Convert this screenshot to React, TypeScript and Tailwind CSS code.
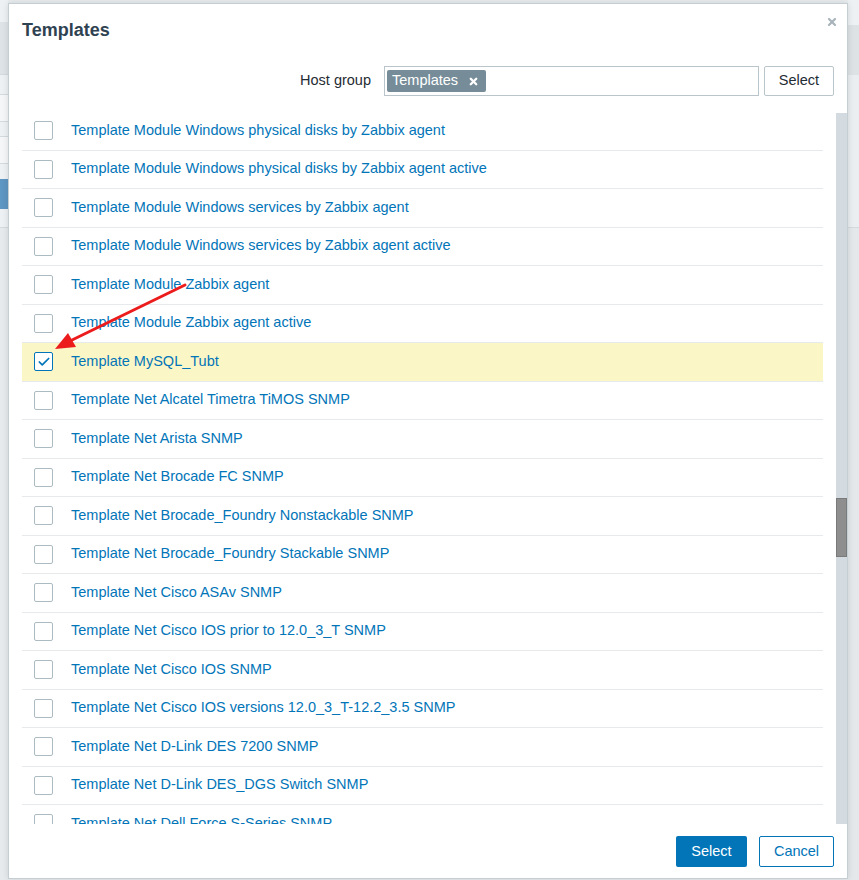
import { Check, X } from 'lucide-react'

const templates = [
  'Template Module Windows physical disks by Zabbix agent',
  'Template Module Windows physical disks by Zabbix agent active',
  'Template Module Windows services by Zabbix agent',
  'Template Module Windows services by Zabbix agent active',
  'Template Module Zabbix agent',
  'Template Module Zabbix agent active',
  'Template MySQL_Tubt',
  'Template Net Alcatel Timetra TiMOS SNMP',
  'Template Net Arista SNMP',
  'Template Net Brocade FC SNMP',
  'Template Net Brocade_Foundry Nonstackable SNMP',
  'Template Net Brocade_Foundry Stackable SNMP',
  'Template Net Cisco ASAv SNMP',
  'Template Net Cisco IOS prior to 12.0_3_T SNMP',
  'Template Net Cisco IOS SNMP',
  'Template Net Cisco IOS versions 12.0_3_T-12.2_3.5 SNMP',
  'Template Net D-Link DES 7200 SNMP',
  'Template Net D-Link DES_DGS Switch SNMP',
  'Template Net Dell Force S-Series SNMP',
]

const selected = 'Template MySQL_Tubt'

function Checkbox({ checked }: { checked: boolean }) {
  return (
    <span
      className={`flex items-center justify-center w-[19px] h-[19px] rounded-[2px] border shrink-0 bg-white ${
        checked ? 'border-[#0275b8]' : 'border-[#acbbc2]'
      }`}
    >
      {checked && <Check size={14} strokeWidth={3} className="text-[#0275b8]" />}
    </span>
  )
}

export default function App() {
  return (
    <div className="relative w-[859px] h-[880px] overflow-hidden bg-[#e8ecef] flex font-['Liberation_Sans',Arial,sans-serif]">
      {/* page behind the overlay, left edge */}
      <div className="w-[8px] shrink-0 flex flex-col">
        <div className="h-[22px] bg-[#eef1f3]" />
        <div className="h-[52px] bg-[#dde3e7]" />
        <div className="h-[20px] bg-[#eef1f3] border-t border-[#d3dade]" />
        <div className="h-[28px] bg-[#f4f6f7] border-y border-[#d3dade]" />
        <div className="h-[14px] bg-[#eef1f3]" />
        <div className="h-[28px] bg-[#f4f6f7] border-y border-[#d3dade]" />
        <div className="h-[15px] bg-[#eef1f3]" />
        <div className="h-[30px] bg-[#5d96c2]" />
        <div className="h-[19px] bg-[#eef1f3] border-b border-[#d3dade]" />
        <div className="flex-1 bg-[#e6eaed]" />
      </div>

      {/* dialog */}
      <div className="relative mt-[3px] w-[840px] h-[876px] shrink-0 bg-white border border-[#c5ced3] shadow-[0_0_6px_rgba(0,0,0,0.12)] flex flex-col">
        <div className="flex justify-between items-start pl-[13px] pr-[9px] pt-[14px]">
          <h1 className="text-[18px] leading-[24px] font-bold text-[#2f4251]">Templates</h1>
          <X size={12} strokeWidth={4.5} className="text-[#a9b4bb] -mt-[2px]" />
        </div>

        <div className="flex items-center justify-end pr-[13px] mt-[24px] h-[30px]">
          <span className="text-[14.5px] text-[#1f2c33] mr-[13px]">Host group</span>
          <div className="w-[375px] h-[30px] border border-[#b9c5cb] flex items-center px-[2px]">
            <span className="flex items-center h-[22px] px-[5px] bg-[#768d99] rounded-[2px] text-white text-[14.5px]">
              Templates
              <X size={11} strokeWidth={5} className="ml-[10px] mr-[2px]" />
            </span>
          </div>
          <button className="ml-[5px] w-[70px] h-[30px] border border-[#b9c5cb] rounded-[2px] text-[14.5px] text-[#1f2c33] bg-white">
            Select
          </button>
        </div>

        <div className="flex mt-[16px] h-[712px] pl-[13px]">
          <div className="w-[801px] overflow-hidden">
            {templates.map(name => {
              const checked = name === selected
              return (
                <div
                  key={name}
                  className={`flex items-center h-[38.5px] border-b border-[#e6eaec] pl-[12px] ${
                    checked ? 'bg-[#fbf6c5]' : ''
                  }`}
                >
                  <Checkbox checked={checked} />
                  <span className="ml-[18px] text-[14.5px] text-[#0275b8] whitespace-nowrap">{name}</span>
                </div>
              )
            })}
          </div>
          <div className="ml-[13px] w-[11px] mt-[1px] bg-[#d3dbe0] flex flex-col">
            <div className="h-[385px]" />
            <div className="h-[59px] bg-[#8e8e8e] border border-[#7a7a7a]" />
          </div>
        </div>

        <div className="flex justify-end pr-[13px] pt-[12px]">
          <button className="w-[71px] h-[31px] rounded-[2px] bg-[#0275b8] text-white text-[14.5px]">Select</button>
          <button className="ml-[12px] w-[75px] h-[31px] rounded-[2px] border border-[#0275b8] bg-white text-[#0275b8] text-[14.5px]">
            Cancel
          </button>
        </div>
      </div>

      {/* page behind the overlay, right edge */}
      <div className="flex-1 flex flex-col">
        <div className="h-[25px] bg-[#eef1f3]" />
        <div className="h-[50px] bg-[#dde2e5]" />
        <div className="h-[153px] bg-[#eaeef0] border-b border-[#d3dade]" />
        <div className="flex-1 bg-[#e4e8eb]" />
      </div>

      {/* annotation arrow */}
      <svg className="absolute left-0 top-0 pointer-events-none" width="859" height="880">
        <line x1="185" y1="285" x2="70" y2="341" stroke="#ec1c1c" strokeWidth="3" strokeLinecap="round" />
        <polygon points="55,349 68,333 76,347" fill="#ec1c1c" />
      </svg>
    </div>
  )
}
